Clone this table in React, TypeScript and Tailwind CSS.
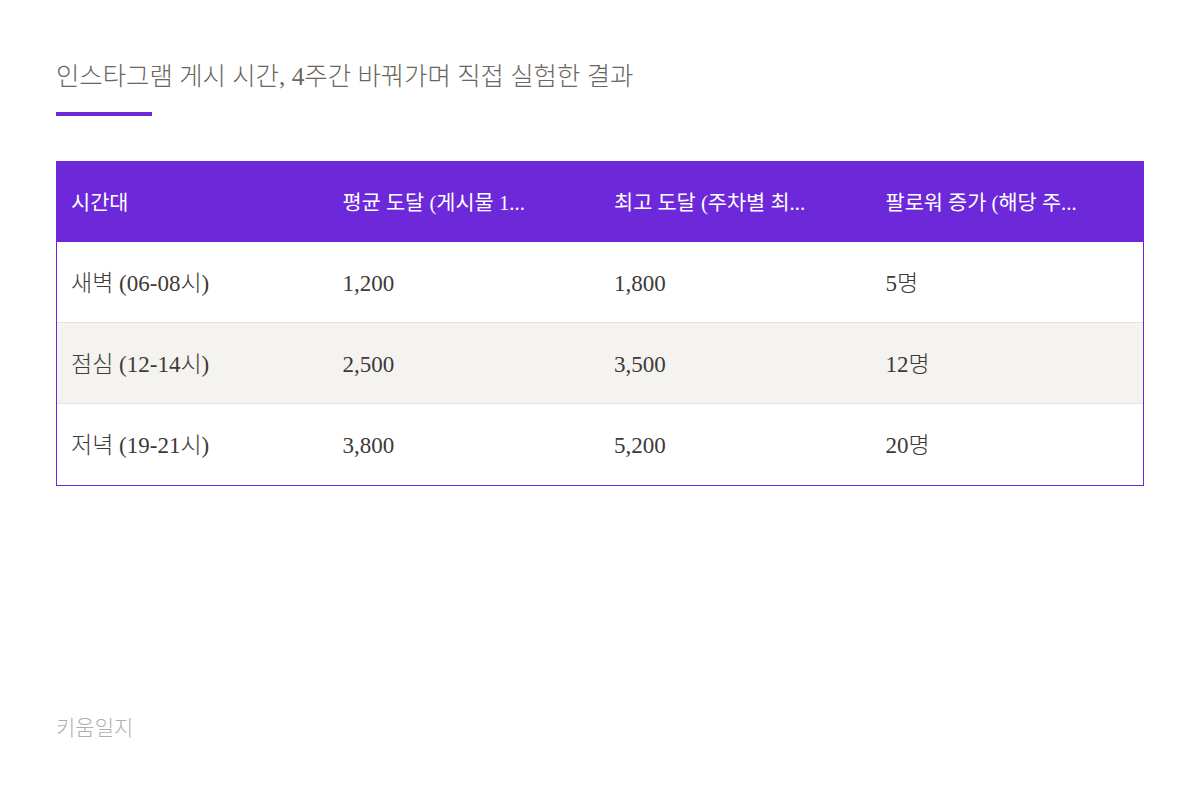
import React from "react";

const rows = [
  ["새벽 (06-08시)", "1,200", "1,800", "5명"],
  ["점심 (12-14시)", "2,500", "3,500", "12명"],
  ["저녁 (19-21시)", "3,800", "5,200", "20명"],
];

const headers = ["시간대", "평균 도달 (게시물 1...", "최고 도달 (주차별 최...", "팔로워 증가 (해당 주..."];

export default function App() {
  return (
    <div
      className="w-[1200px] h-[800px] bg-white flex flex-col px-14 pt-[58px] pb-[56px]"
      style={{ fontFamily: '"Liberation Serif", "Noto Sans CJK KR", serif' }}
    >
      <h1 className="text-[25.4px] leading-[36px] text-[#6b6660] font-light">
        인스타그램 게시 시간, 4주간 바꿔가며 직접 실험한 결과
      </h1>
      <div className="w-24 h-1 bg-[#6d28d9] mt-[18px]" />
      <div className="mt-[45px] border border-[#6d28d9]">
        <div className="grid grid-cols-4 bg-[#6d28d9] h-[80px] items-center">
          {headers.map((h) => (
            <div key={h} className="px-[14px] pt-[2px] text-white text-[20.8px] font-normal">
              {h}
            </div>
          ))}
        </div>
        {rows.map((r, i) => (
          <div
            key={i}
            className={`grid grid-cols-4 h-[81px] items-center ${i === 1 ? "bg-[#f5f3f0]" : "bg-white"} ${i < rows.length - 1 ? "border-b border-[#e7e2dc]" : ""}`}
          >
            {r.map((c, j) => (
              <div key={j} className="px-[14px] pt-[4px] text-[23px] font-light text-[#3d3a37]">
                {c}
              </div>
            ))}
          </div>
        ))}
      </div>
      <div className="mt-auto text-[21px] font-light text-[#b3aeaa]">키움일지</div>
    </div>
  );
}
